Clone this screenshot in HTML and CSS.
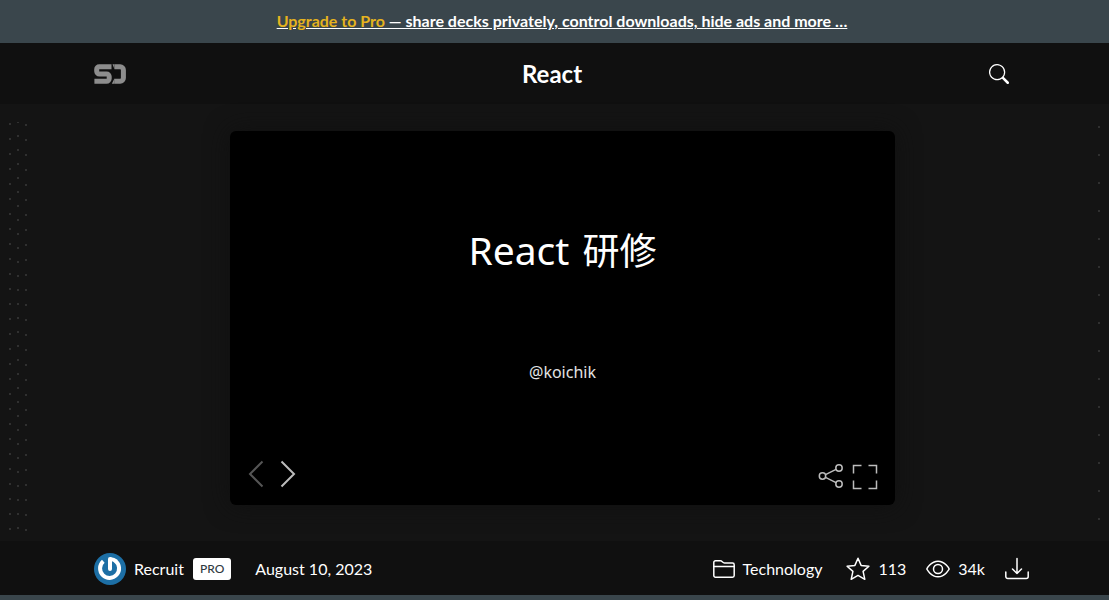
FILE: index.html
```html
<!DOCTYPE html>
<html lang="en">
<head>
<meta charset="utf-8">
<meta name="viewport" content="width=device-width, initial-scale=1">
<title>React - Speaker Deck</title>
<link rel="stylesheet" href="styles.css">
</head>
<body>
<div class="banner"><a href="#"><span class="banner-accent">Upgrade to Pro</span> — share decks privately, control downloads, hide ads and more …</a></div>
<header class="header">
  <div class="container header-row">
    <a class="logo" href="#" aria-label="Speaker Deck">
      <svg width="32" height="20" viewBox="0 0 32 20" fill="none" stroke="#8d8d8d" stroke-width="5">
        <path d="M17.500 2.800H5.200a2.500 2.500 0 0 0-2.500 2.500v1.900a2.700 2.700 0 0 0 2.700 2.700h7.200a2.600 2.600 0 0 1 2.600 2.600v2a2.700 2.700 0 0 1-2.700 2.700H.4"/>
        <path d="M20.500 2.800h5.700a3.200 3.200 0 0 1 3.200 3.200v8a3.200 3.200 0 0 1-3.200 3.200h-6"/>
        <path d="M20.500.3h-2l2 5zM20.300 19.700h-2.500l2.500-5z" fill="#8d8d8d" stroke="none"/>
      </svg>
    </a>
    <h1 class="title">React</h1>
    <button class="search" type="button" aria-label="Search">
      <svg width="20" height="20" viewBox="0 0 16 16" fill="#fff"><path d="M11.742 10.344a6.500 6.500 0 1 0-1.397 1.398h-.001c.030.040.062.078.098.115l3.850 3.850a1 1 0 0 0 1.415-1.414l-3.850-3.850a1.007 1.007 0 0 0-.115-.1zM12 6.500a5.500 5.500 0 1 1-11 0 5.500 5.500 0 0 1 11 0z"/></svg>
    </button>
  </div>
</header>
<main class="stage">
  <section class="player" aria-label="Slide 1">
    <h2 class="slide-title">React <span class="slide-title-cjk" lang="ja">研修</span></h2>
    <p class="slide-author">@koichik</p>
    <div class="controls">
      <div class="control-group nav">
        <button class="control muted" type="button" aria-label="Previous slide"><svg width="16" height="28" viewBox="0 0 16 28"><path d="M14.500 1.500 2 14l12.500 12.500"/></svg></button>
        <button class="control" type="button" aria-label="Next slide"><svg width="16" height="28" viewBox="0 0 16 28"><path d="M1.500 1.500 14 14 1.500 26.500"/></svg></button>
      </div>
      <div class="control-group tools">
        <button class="control" type="button" aria-label="Share"><svg class="thin" width="26" height="26" viewBox="0 0 26 26"><circle cx="4.500" cy="12" r="3.200"/><circle cx="21" cy="4" r="3.200"/><circle cx="21" cy="20" r="3.200"/><path d="m7.500 10.600 10.500-5.200M7.500 13.400l10.500 5.200"/></svg></button>
        <button class="control" type="button" aria-label="Fullscreen"><svg class="thin" width="26" height="26" viewBox="0 0 26 26"><path d="M1.500 9.500V1.500H9.500M16.500 1.500h8V9.500M24.500 16.500v8H16.500M9.500 24.500H1.500V16.500"/></svg></button>
      </div>
    </div>
  </section>
</main>
<footer class="footer">
  <div class="container footer-row">
    <div class="meta">
      <a class="owner" href="#">
        <svg width="32" height="32" viewBox="0 0 32 32"><circle cx="16" cy="16" r="16" fill="#1d6fa5"/><g fill="none" stroke="#fff" stroke-width="4"><path d="M9.300 8.300A9.500 9.500 0 1 0 21.500 8"/><path d="M16 6v10" stroke-linecap="round"/><path d="M16 6q4 .2 6.400 2.500"/></g></svg>
        <span>Recruit</span>
      </a>
      <span class="badge">PRO</span>
      <time class="date" datetime="2023-08-10">August 10, 2023</time>
    </div>
    <div class="stats">
      <a class="stat" href="#"><svg class="line" width="22" height="18" viewBox="0 0 22 18"><path d="M.8 6V2.500A1.700 1.700 0 0 1 2.500.8h5c1.600 0 2 2.200 4 2.200h8a1.700 1.700 0 0 1 1.700 1.700v10.800a1.700 1.700 0 0 1-1.700 1.700h-17A1.700 1.700 0 0 1 .8 15.500z"/><path d="M.8 6.500h20.400"/></svg><span>Technology</span></a>
      <a class="stat star" href="#"><svg class="line" width="24" height="24" viewBox="0 0 24 24"><path d="m12 1.200 3.100 7.200 7.800.8-5.800 5.200 1.700 7.900L12 18.400l-6.800 3.900 1.700-7.900L1.100 9.200l7.800-.8z"/></svg><span>113</span></a>
      <span class="stat"><svg class="line" width="24" height="18" viewBox="0 0 24 18"><path d="M.8 9S4.800 1.200 12 1.200 23.200 9 23.200 9 19.200 16.800 12 16.800.8 9 .8 9z"/><circle cx="12" cy="9" r="4.500"/></svg><span>34k</span></span>
      <a class="stat" href="#" aria-label="Download"><svg class="line" width="24" height="24" viewBox="0 0 24 24"><path d="M12 1.500v15M7.500 12l4.500 4.500 4.500-4.500M.8 15v4.500a2 2 0 0 0 2 2h18.400a2 2 0 0 0 2-2V15"/></svg></a>
    </div>
  </div>
</footer>
</body>
</html>
```

FILE: styles.css
```css
* { box-sizing: border-box; }

body {
  margin: 0;
  min-height: 100vh;
  background: #3a464c;
  color: #fff;
  font-family: Lato, "Liberation Sans", sans-serif;
  font-size: 16px;
  line-height: 24px;
}

a { color: inherit; text-decoration: none; }
h1, h2, p { margin: 0; }
svg { display: block; flex: none; }
button { border: 0; background: none; color: inherit; font: inherit; cursor: pointer; }

.banner {
  padding: 9px 0 10px 15px;
  text-align: center;
  font-weight: 700;
}
.banner a { text-decoration: underline; }
.banner-accent { color: #e5b31e; }

.container {
  width: 100%;
  max-width: 951px;
  margin: 0 auto;
  padding-left: 15px;
}

.header { background: #101010; }
.header-row {
  display: grid;
  grid-template-columns: auto 1fr auto;
  align-items: center;
  min-height: 61px;
}
.title {
  text-align: center;
  font-size: 24px;
  line-height: 32px;
  font-weight: 700;
}
.search { padding: 11px 21px 11px 11px; }

.stage {
  padding: 27px 0 36px 16px;
  background-color: #141414;
  background-image:
    linear-gradient(#141414, #141414),
    radial-gradient(circle at 2px 2px, #303030 0 1px, transparent 1px),
    radial-gradient(circle at 2px 8px, #303030 0 1px, transparent 1px),
    radial-gradient(circle at 2px 3px, #303030 0 1px, transparent 1px),
    radial-gradient(circle at 2px 3px, #303030 0 1px, transparent 1px);
  background-size: 100% 18px, 4px 15px, 4px 14px, 4px 15px, 4px 28px;
  background-position: left top, left 8px top 18px, left 16px top 24px, left 24px top 18px, right 8px top 20px;
  background-repeat: no-repeat, repeat-y, repeat-y, repeat-y, repeat-y;
}

.player {
  display: grid;
  grid-template-rows: 1fr auto 1fr;
  width: 61%;
  max-width: 665px;
  min-width: 320px;
  aspect-ratio: 16 / 9;
  margin: 0 auto;
  padding-top: 26px;
  border-radius: 6px;
  background: #000;
  box-shadow: 0 0 24px #101010;
  text-align: center;
  font-family: "Noto Sans", "Noto Sans CJK JP", sans-serif;
}
.slide-title {
  align-self: end;
  font-size: 39px;
  line-height: 56px;
  font-weight: 400;
}
.slide-title-cjk {
  margin-left: 3px;
  font-size: 37px;
  line-height: 48px;
}
.slide-author {
  padding-top: 82px;
  color: #e4e4e4;
}
.controls {
  display: flex;
  align-items: end;
  justify-content: space-between;
  padding: 0 17px 15px 18px;
}
.control-group { display: flex; align-items: center; }
.nav { gap: 16px; padding-bottom: 2px; }
.tools { gap: 8px; }
.control { padding: 0; color: #bcbcbc; }
.control.muted { color: #555; }
.control svg { fill: none; stroke: currentColor; stroke-width: 2; }
.control .thin { stroke-width: 1.5; }

.footer { background: #101010; }
.footer-row {
  display: flex;
  align-items: center;
  justify-content: space-between;
  min-height: 54px;
  padding-top: 2px;
}
.meta, .owner, .stats, .stat { display: flex; align-items: center; }
.owner { gap: 8px; }
.badge {
  margin-left: 9px;
  padding: 0 7px;
  border-radius: 3px;
  background: #fff;
  color: #303a3f;
  font-size: 12px;
  line-height: 22px;
  font-weight: 500;
}
.date { margin-left: 24px; }
.stats { gap: 20px; padding-right: 1px; }
.stat { gap: 8px; }
.star { margin-left: 4px; }
.line { fill: none; stroke: #fff; stroke-width: 1.5; stroke-linejoin: round; stroke-linecap: round; }
```
